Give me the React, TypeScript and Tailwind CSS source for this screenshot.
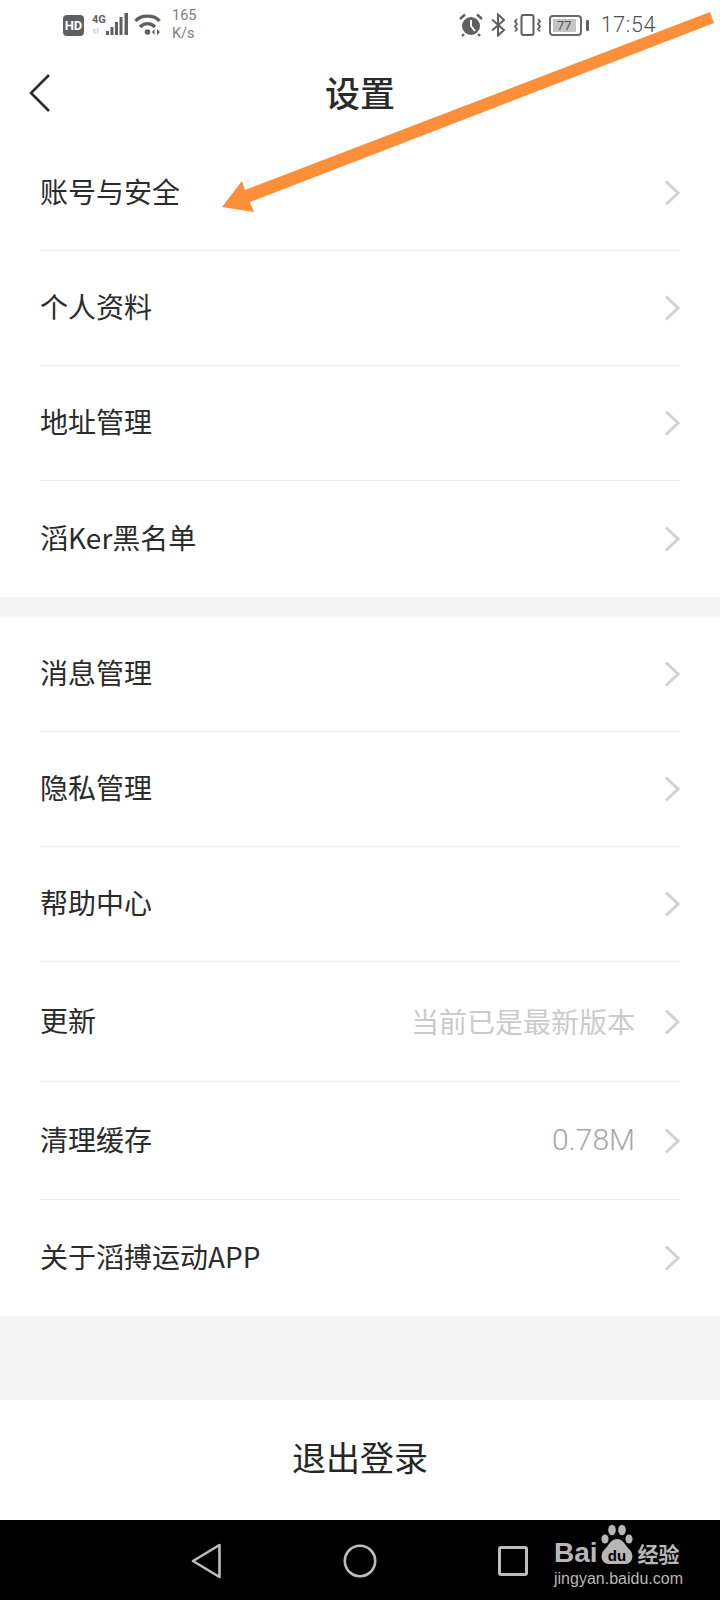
function Chevron() {
  return (
    <svg width="16" height="26" viewBox="0 0 16 26" fill="none" className="shrink-0">
      <path d="M2 1.5 L14 13 L2 24.5" stroke="#d2d2d2" strokeWidth="3" />
    </svg>
  );
}

function Row({ label, value, height, border = true, light, className = '' }: { label: string; value?: string; height: string; border?: boolean; light?: boolean; className?: string }) {
  return (
    <div className={`${height} ml-[40px] mr-[40px] flex items-center justify-between ${border ? 'border-b border-[#f1f1f1]' : ''} ${className}`}>
      <span className="pb-[4px] text-[28px] leading-none text-[#2b2b2b]">{label}</span>
      <div className="flex items-center">
        {value && (
          <span className={`${light ? "font-['Roboto',sans-serif] text-[30px] font-light text-[#a8a8a8]" : 'text-[28px] text-[#cbcbcb]'} mr-[29px] pb-[2px] leading-none`}>{value}</span>
        )}
        <Chevron />
      </div>
    </div>
  );
}

function StatusLeft() {
  return (
    <div className="flex items-center">
      <div className="flex h-[21px] w-[21px] items-center justify-center rounded-[4px] bg-[#5f5f5f] text-[13px] font-bold leading-none text-white">HD</div>
      <div className="ml-[8px] flex h-[22px] w-[13px] flex-col items-start justify-between">
        <span className="text-[11px] font-bold leading-[12px] text-[#5f5f5f]">4G</span>
        <span className="text-[8px] font-bold leading-[9px] text-[#c9c9c9]">1l</span>
      </div>
      <svg width="24" height="24" viewBox="0 0 24 24">
        <g fill="#5f5f5f">
          <rect x="1" y="18" width="3" height="4" />
          <rect x="5.5" y="14" width="3" height="8" />
          <rect x="10" y="9" width="3" height="13" />
          <rect x="14.5" y="4" width="3" height="18" />
          <rect x="19.5" y="0" width="3.5" height="22" />
        </g>
      </svg>
      <svg width="28" height="24" viewBox="0 0 28 24" className="ml-[5px]">
        <g fill="none" stroke="#5f5f5f" strokeWidth="3.4">
          <path d="M1.5 8 C 7 1.5, 20 1.5, 25.5 8" />
          <path d="M6 14 C 10 9.5, 17 9.5, 21 14" />
        </g>
        <circle cx="13.5" cy="19" r="2.8" fill="#5f5f5f" />
        <path d="M20.5 16 L20.5 22 L18 19 Z M23 16 L23 22 L26 19 Z" fill="#5f5f5f" />
      </svg>
      <div className="ml-[10px] flex flex-col items-start text-[14.5px] leading-[18px] text-[#808080]">
        <span>165</span>
        <span>K/s</span>
      </div>
    </div>
  );
}

function StatusRight() {
  return (
    <div className="flex items-center">
      <svg width="24" height="24" viewBox="0 0 24 24">
        <circle cx="12" cy="13" r="9" fill="#5f5f5f" />
        <path d="M12 7 V13 L16 18" fill="none" stroke="#fff" strokeWidth="2" />
        <path d="M1 6 L6 1.5 M23 6 L18 1.5 M5 21 L3 23 M19 21 L21 23" stroke="#5f5f5f" strokeWidth="2.4" />
      </svg>
      <svg width="16" height="24" viewBox="0 0 16 24" className="ml-[7px]">
        <path d="M2 6.5 L14 17 L8 22.5 V1.5 L14 7 L2 17.5" fill="none" stroke="#5f5f5f" strokeWidth="2" />
      </svg>
      <svg width="27" height="24" viewBox="0 0 27 24" className="ml-[8px]">
        <rect x="7.5" y="2" width="12" height="20" rx="2" fill="none" stroke="#5f5f5f" strokeWidth="2" />
        <path d="M3 6 L1 8.5 L3 11 L1 13.5 L3 16 L1 18.5 M24 6 L26 8.5 L24 11 L26 13.5 L24 16 L26 18.5" fill="none" stroke="#5f5f5f" strokeWidth="1.8" />
      </svg>
      <div className="ml-[8px] flex items-center">
        <div className="flex h-[21px] w-[33px] items-stretch rounded-[4px] border-2 border-[#6a6a6a] p-[2px]">
          <div className="flex w-[23px] items-center justify-center bg-[#c4c4c4] text-[13px] leading-none text-[#555555]">77</div>
        </div>
        <div className="ml-[4px] h-[11px] w-[3px] rounded-[1px] bg-[#5f5f5f]" />
      </div>
      <span className="ml-[12px] text-[21.5px] font-light leading-none tracking-[0.6px] text-[#505050]">17:54</span>
    </div>
  );
}

function BaiduLogo() {
  return (
    <div className="mb-[10px] ml-[26px] flex w-[128px] flex-col text-[#b7b7b7]">
      <div className="flex h-[41px] items-end">
        <span className="font-['Liberation_Sans',sans-serif] text-[28px] font-bold leading-[24px]">Bai</span>
        <svg width="38" height="41" viewBox="0 0 38 41">
          <g fill="#b7b7b7">
            <ellipse cx="7" cy="15" rx="3.6" ry="4.6" />
            <ellipse cx="14" cy="6" rx="3.8" ry="5.2" />
            <ellipse cx="24" cy="6" rx="3.8" ry="5.2" />
            <ellipse cx="31" cy="15" rx="3.6" ry="4.6" />
            <path d="M19 15 C 25 15, 27 21, 31 25 C 36 29, 36 39, 28 40 L10 40 C 2 39, 2 29, 7 25 C 11 21, 13 15, 19 15 Z" />
          </g>
          <text x="19" y="37" textAnchor="middle" fontSize="15" fontWeight="700" fontFamily="Liberation Sans" fill="#000000">du</text>
        </svg>
        <span className="ml-[2px] text-[21px] font-bold leading-[24px]">经验</span>
      </div>
      <span className="mt-[5px] font-['Liberation_Sans',sans-serif] text-[16px] leading-[18px]">jingyan.baidu.com</span>
    </div>
  );
}

export default function App() {
  return (
    <div className="relative flex h-[1600px] w-[720px] flex-col overflow-hidden bg-white font-['Noto_Sans_CJK_SC','Noto_Sans',sans-serif]">
      {/* Status bar */}
      <div className="flex h-[48px] shrink-0 items-center justify-between pl-[63px] pr-[64px] pt-[2px] font-['Roboto',sans-serif]">
        <StatusLeft />
        <StatusRight />
      </div>

      {/* Header */}
      <div className="relative flex h-[92px] shrink-0 items-center justify-center pb-[6px]">
        <svg width="24" height="40" viewBox="0 0 24 40" fill="none" className="absolute left-[28px] top-[25px]">
          <path d="M21 2 L3 20 L21 38" stroke="#2b2b2b" strokeWidth="2.6" />
        </svg>
        <span className="text-[35px] font-medium leading-none text-[#2a2a2a]">设置</span>
      </div>

      {/* Account group */}
      <div className="shrink-0">
        <Row label="账号与安全" height="h-[111px]" className="pb-[5px]" />
        <Row label="个人资料" height="h-[115px]" />
        <Row label="地址管理" height="h-[115px]" />
        <Row label="滔Ker黑名单" height="h-[116px]" border={false} />
      </div>

      <div className="h-[20px] shrink-0 bg-[#f4f4f4]" />

      {/* General group */}
      <div className="shrink-0">
        <Row label="消息管理" height="h-[115px]" />
        <Row label="隐私管理" height="h-[115px]" />
        <Row label="帮助中心" height="h-[115px]" />
        <Row label="更新" value="当前已是最新版本" height="h-[120px]" />
        <Row label="清理缓存" value="0.78M" light height="h-[118px]" />
        <Row label="关于滔搏运动APP" height="h-[116px]" border={false} />
      </div>

      <div className="h-[84px] shrink-0 bg-[#f4f4f4]" />

      {/* Logout */}
      <div className="flex h-[120px] shrink-0 items-center justify-center pb-[6px]">
        <span className="text-[34px] leading-none text-[#262626]">退出登录</span>
      </div>

      {/* Android nav bar */}
      <div className="flex h-[81px] shrink-0 items-center bg-black pl-[191px]">
        <svg width="31" height="36" viewBox="0 0 31 36" fill="none">
          <path d="M28.5 2 L2 18 L28.5 34 Z" stroke="#bdbdbd" strokeWidth="2.6" strokeLinejoin="round" />
        </svg>
        <svg width="34" height="34" viewBox="0 0 34 34" fill="none" className="ml-[121px]">
          <circle cx="17" cy="17" r="15.2" stroke="#bdbdbd" strokeWidth="2.6" />
        </svg>
        <div className="ml-[121px] h-[30px] w-[30px] rounded-[3px] border-[3px] border-[#bdbdbd]" />
        <BaiduLogo />
      </div>

      {/* Annotation arrow drawn over the page */}
      <svg width="720" height="230" viewBox="0 0 720 230" className="absolute left-0 top-0">
        <polygon points="710,12 714,23 250,202 254,212 222,207 242,181 245,190" fill="#fd8f3b" />
      </svg>
    </div>
  );
}
